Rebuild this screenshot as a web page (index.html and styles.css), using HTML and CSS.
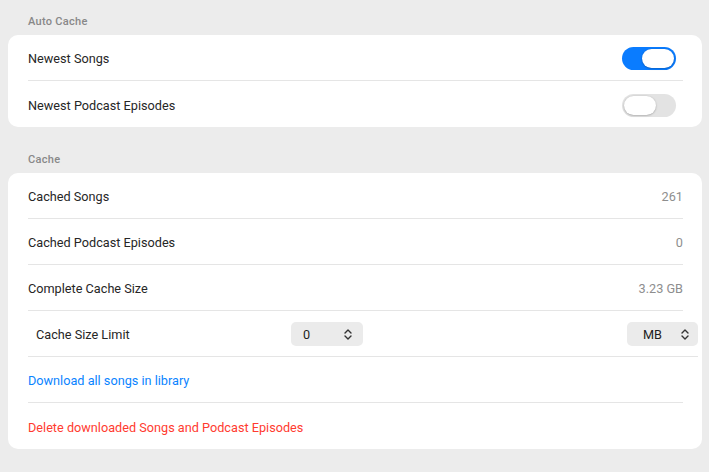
FILE: index.html
```html
<!DOCTYPE html>
<html lang="en">
  <head>
    <meta charset="UTF-8" />
    <meta name="viewport" content="width=device-width, initial-scale=1.0" />
    <title>Cache Settings</title>
    <link rel="stylesheet" href="styles.css">
  </head>
  <body>
    <div class="settings">
      <!-- Auto Cache -->
      <div class="section-title">Auto Cache</div>
      <div class="card">
        <div class="row">
          <span class="label">Newest Songs</span>
          <span class="toggle on"><span class="knob"></span></span>
        </div>
        <div class="row">
          <span class="label">Newest Podcast Episodes</span>
          <span class="toggle"><span class="knob"></span></span>
        </div>
      </div>

      <!-- Cache -->
      <div class="section-title">Cache</div>
      <div class="card">
        <div class="row">
          <span class="label">Cached Songs</span>
          <span class="value">261</span>
        </div>
        <div class="row">
          <span class="label">Cached Podcast Episodes</span>
          <span class="value">0</span>
        </div>
        <div class="row">
          <span class="label">Complete Cache Size</span>
          <span class="value">3.23 GB</span>
        </div>
        <div class="row limit">
          <span class="label limit-label">Cache Size Limit</span>
          <span class="picker num">
            <span>0</span>
            <svg width="8" height="11" viewBox="0 0 8 11"><path d="M1 4 L4 1 L7 4 M1 7 L4 10 L7 7" fill="none" stroke="#333" stroke-width="1.4" stroke-linecap="round" stroke-linejoin="round"/></svg>
          </span>
          <span class="spacer"></span>
          <span class="picker unit">
            <span>MB</span>
            <svg width="8" height="11" viewBox="0 0 8 11"><path d="M1 4 L4 1 L7 4 M1 7 L4 10 L7 7" fill="none" stroke="#333" stroke-width="1.4" stroke-linecap="round" stroke-linejoin="round"/></svg>
          </span>
        </div>
        <div class="row">
          <span class="label link">Download all songs in library</span>
        </div>
        <div class="row">
          <span class="label danger">Delete downloaded Songs and Podcast Episodes</span>
        </div>
      </div>
    </div>
  </body>
</html>
```

FILE: styles.css
```css
body {
  margin: 0;
  background: #ececec;
  font-family: Roboto, "Liberation Sans", Arial, sans-serif;
  font-size: 12.7px;
  color: #262626;
}
.settings {
  padding: 0 7px 0 8px;
}
.section-title {
  font-size: 11px;
  font-weight: 500;
  color: #888;
  padding: 15px 0 0 20px;
  height: 20px;
  letter-spacing: 0.3px;
}
.card {
  background: #fff;
  border-radius: 10px;
  padding: 0 19px 0 20px;
  margin-bottom: 11px;
}
.row {
  height: 46px;
  display: flex;
  align-items: center;
  justify-content: space-between;
  border-bottom: solid 1px #e5e5e5;
  box-sizing: border-box;
}
.row:last-child {
  border-bottom: none;
}
.label {
  padding-top: 2px;
}
.value {
  color: #8e8e8e;
  padding-top: 2px;
}
.link {
  color: #0a84ff;
}
.danger {
  color: #ff3b30;
}

/* toggle switch */
.toggle {
  width: 54px;
  height: 23px;
  border-radius: 12px;
  background: #e3e3e3;
  display: flex;
  align-items: center;
  padding: 0 2px;
  box-sizing: border-box;
  margin: 2px 7px 0 0;
}
.toggle.on {
  background: #0a7cff;
  justify-content: flex-end;
}
.knob {
  width: 32px;
  height: 19px;
  border-radius: 10px;
  background: #fff;
  box-shadow: 0 0.5px 2px rgba(0, 0, 0, 0.3);
}

/* cache size limit row */
.row.limit {
  justify-content: flex-start;
  margin-right: -15px;
}
.limit-label {
  width: 255px;
  padding-left: 8px;
}
.spacer {
  flex: 1;
}
.picker {
  height: 24px;
  border-radius: 5px;
  background: #ebebeb;
  display: flex;
  align-items: center;
  justify-content: space-between;
  box-sizing: border-box;
  color: #1e1e1e;
  margin-top: 1px;
}
.picker.num {
  width: 72px;
  padding: 0 11px 0 12px;
}
.picker.unit {
  width: 71px;
  padding: 0 9px 0 16px;
}
```
